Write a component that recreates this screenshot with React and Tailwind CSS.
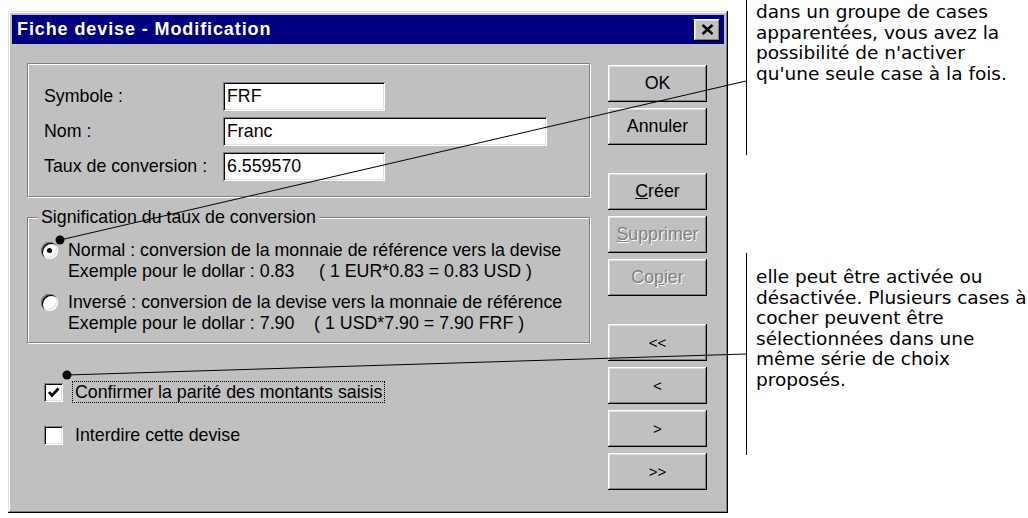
const raised =
  "shadow-[inset_-1px_-1px_#000,inset_1px_1px_#fff,inset_-2px_-2px_#808080,inset_2px_2px_#dfdfdf]";
const sunken =
  "shadow-[inset_1px_1px_#808080,inset_-1px_-1px_#fff,inset_2px_2px_#000,inset_-2px_-2px_#dfdfdf]";
const etched = "border border-[#808080] shadow-[inset_1px_1px_#fff,1px_1px_#fff]";

const Field = ({ label, value, width }) => (
  <div className="flex items-center h-[29px]">
    <span className="w-[179px]">{label}</span>
    <div className={`${width} h-[29px] bg-white ${sunken} pl-[4px] flex items-center`}>
      {value}
    </div>
  </div>
);

const Btn = ({ children, disabled, className = "" }) => (
  <button
    className={`h-[37px] w-full bg-[#c0c0c0] ${raised} flex items-center justify-center ${
      disabled ? "text-[#808080] [text-shadow:1px_1px_0_#fff]" : "text-black"
    } ${className}`}
  >
    {children}
  </button>
);

const Radio = ({ checked }) => (
  <div className="w-[17px] h-[17px] mt-[2px] shrink-0 rounded-full bg-white shadow-[inset_1px_1px_#808080,inset_2px_2px_#000,inset_-1px_-1px_#fff,inset_-2px_-2px_#dfdfdf] flex items-center justify-center">
    {checked && <div className="w-[5px] h-[5px] rounded-full bg-black" />}
  </div>
);

const Check = ({ checked }) => (
  <div className={`w-[19px] h-[19px] shrink-0 bg-white ${sunken} flex items-center justify-center`}>
    {checked && (
      <svg width="13" height="11" viewBox="0 0 13 11">
        <path d="M2 5 L5 8.5 L11.5 1.5" fill="none" stroke="#000" strokeWidth="2.6" />
      </svg>
    )}
  </div>
);

export default function App() {
  return (
    <div className="relative w-[1028px] h-[518px] overflow-hidden bg-white flex items-start font-['Liberation_Sans',Arial,sans-serif] text-[17.8px] leading-[21px] text-black">
      {/* dialog */}
      <div className="ml-[8px] mt-[11px] w-[720px] h-[502px] bg-[#c0c0c0] p-[4px] shadow-[inset_-1px_-1px_#000,inset_1px_1px_#dfdfdf,inset_-2px_-2px_#808080,inset_2px_2px_#fff]">
        <div className="h-[29px] bg-[#000080] flex items-center justify-between pl-[5px] pr-[4px]">
          <span className="text-white font-bold text-[18px] tracking-[0.9px]">
            Fiche devise - Modification
          </span>
          <button className={`w-[26px] h-[22px] bg-[#c0c0c0] ${raised} flex items-center justify-center`}>
            <svg width="13" height="11" viewBox="0 0 13 11">
              <path d="M1.5 1 L11.5 10 M11.5 1 L1.5 10" stroke="#000" strokeWidth="2.4" />
            </svg>
          </button>
        </div>

        <div className="flex pl-[15px] pt-[19px] gap-[18px]">
          <div className="w-[563px] flex flex-col">
            <div className={`h-[134px] ${etched} pt-[18px] pl-[16px] flex flex-col gap-[6px]`}>
              <Field label="Symbole :" value="FRF" width="w-[162px]" />
              <Field label="Nom :" value="Franc" width="w-[324px]" />
              <Field label="Taux de conversion :" value="6.559570" width="w-[162px]" />
            </div>

            <fieldset className={`mt-[10px] ${etched} pl-[13px] pt-[12px] pb-[8px]`}>
              <legend className="-ml-[3px] px-[3px] bg-[#c0c0c0]">
                Signification du taux de conversion
              </legend>
              <div className="flex gap-[10px]">
                <Radio checked />
                <div>
                  <div>Normal : conversion de la monnaie de référence vers la devise</div>
                  <div className="whitespace-pre">Exemple pour le dollar : 0.83     ( 1 EUR*0.83 = 0.83 USD )</div>
                </div>
              </div>
              <div className="flex gap-[10px] mt-[10px]">
                <Radio />
                <div>
                  <div>Inversé : conversion de la devise vers la monnaie de référence</div>
                  <div className="whitespace-pre">Exemple pour le dollar : 7.90    ( 1 USD*7.90 = 7.90 FRF )</div>
                </div>
              </div>
            </fieldset>

            <div className="mt-[38px] ml-[17px] flex items-center h-[22px]">
              <Check checked />
              <span className="ml-[9px] border border-dotted border-black px-[2px] leading-[20px]">
                Confirmer la parité des montants saisis
              </span>
            </div>
            <div className="mt-[21px] ml-[17px] flex items-center h-[22px]">
              <Check />
              <span className="ml-[12px]">Interdire cette devise</span>
            </div>
          </div>

          <div className="w-[99px] flex flex-col gap-[6px] pt-[2px]">
            <Btn>OK</Btn>
            <Btn>Annuler</Btn>
            <Btn className="mt-[22px]">
              <span><span className="underline">C</span>réer</span>
            </Btn>
            <Btn disabled>
              <span><span className="underline">S</span>upprimer</span>
            </Btn>
            <Btn disabled>
              <span>Co<span className="underline">p</span>ier</span>
            </Btn>
            <Btn className="mt-[22px] text-[15px]">&lt;&lt;</Btn>
            <Btn className="text-[15px]">&lt;</Btn>
            <Btn className="text-[15px]">&gt;</Btn>
            <Btn className="text-[15px]">&gt;&gt;</Btn>
          </div>
        </div>
      </div>

      {/* annotations */}
      <div className="ml-[18px] flex flex-col font-['DejaVu_Sans',sans-serif] text-[18.5px] leading-[20.5px] whitespace-nowrap">
        <div className="h-[155px] border-l border-black pl-[9px] pt-[2px]">
          <div>dans un groupe de cases</div>
          <div>apparentées, vous avez la</div>
          <div>possibilité de n'activer</div>
          <div>qu'une seule case à la fois.</div>
        </div>
        <div className="mt-[98px] h-[202px] border-l border-black pl-[9px] pt-[14px]">
          <div>elle peut être activée ou</div>
          <div>désactivée. Plusieurs cases à</div>
          <div>cocher peuvent être</div>
          <div>sélectionnées dans une</div>
          <div>même série de choix</div>
          <div>proposés.</div>
        </div>
      </div>

      {/* callout lines */}
      <svg className="absolute inset-0 pointer-events-none" width="1028" height="518">
        <line x1="60" y1="240" x2="746" y2="81" stroke="#000" strokeWidth="1" />
        <circle cx="60" cy="240" r="4.5" fill="#000" />
        <line x1="67" y1="375" x2="746" y2="354" stroke="#000" strokeWidth="1" />
        <circle cx="67" cy="375" r="4.5" fill="#000" />
      </svg>
    </div>
  );
}
